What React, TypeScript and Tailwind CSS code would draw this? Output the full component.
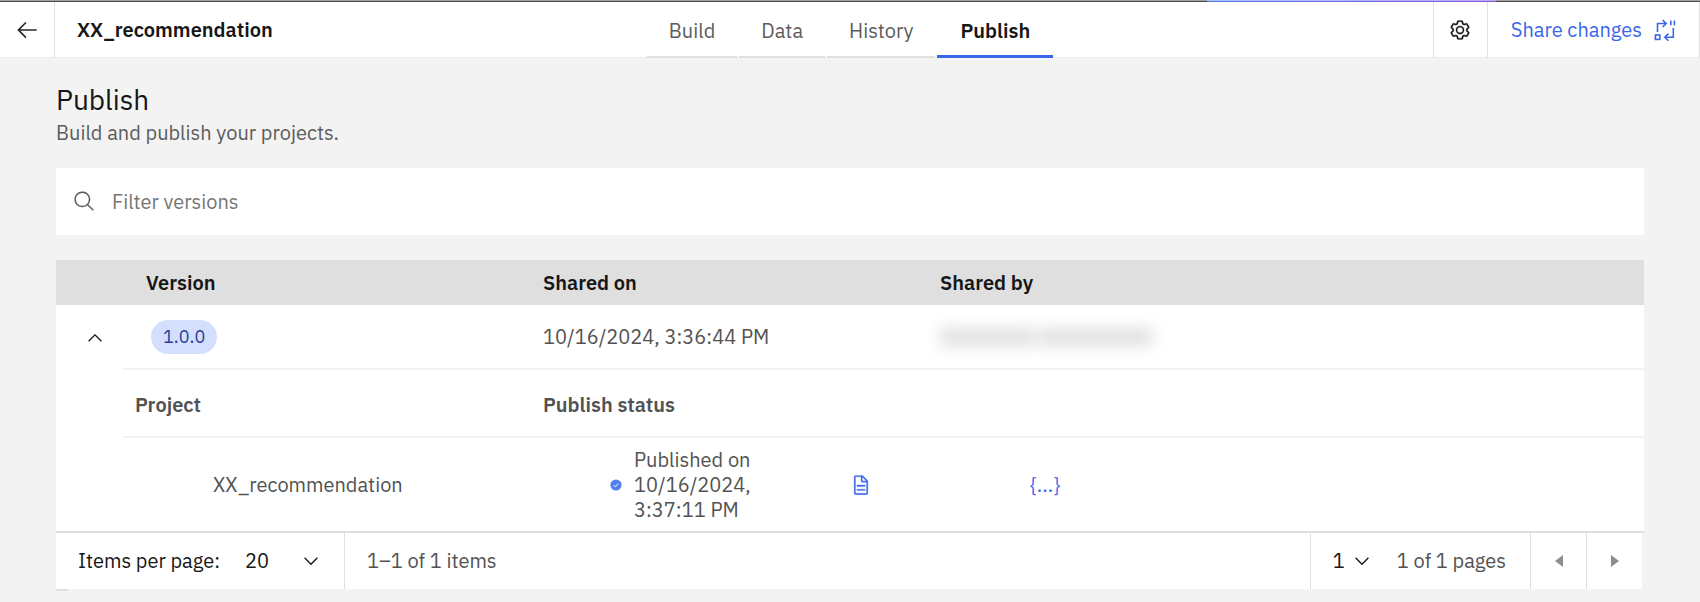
import React from "react";

type IconProps = { className?: string };

function ArrowLeft({ className }: IconProps) {
  return (
    <svg viewBox="0 0 32 32" fill="currentColor" className={className} aria-hidden="true">
      <path d="M14 26l1.41-1.41L7.83 17H28v-2H7.83l7.58-7.59L14 6 4 16z" />
    </svg>
  );
}

function Settings({ className }: IconProps) {
  return (
    <svg viewBox="0 0 32 32" fill="currentColor" stroke="currentColor" strokeWidth="0.4" className={className} aria-hidden="true">
      <path d="M27,16.76c0-.25,0-.5,0-.76s0-.51,0-.77l1.92-1.68A2,2,0,0,0,29.3,11L26.94,7a2,2,0,0,0-1.73-1,2,2,0,0,0-.64.1l-2.43.82a11.35,11.35,0,0,0-1.31-.75l-.51-2.52a2,2,0,0,0-2-1.61H13.64a2,2,0,0,0-2,1.61l-.51,2.52a11.48,11.48,0,0,0-1.32.75L7.43,6.06A2,2,0,0,0,6.79,6,2,2,0,0,0,5.06,7L2.7,11a2,2,0,0,0,.41,2.51L5,15.24c0,.25,0,.5,0,.76s0,.51,0,.77L3.11,18.45A2,2,0,0,0,2.7,21L5.06,25a2,2,0,0,0,1.73,1,2,2,0,0,0,.64-.1l2.43-.82a11.35,11.35,0,0,0,1.31.75l.51,2.52a2,2,0,0,0,2,1.61h4.72a2,2,0,0,0,2-1.61l.51-2.52a11.48,11.48,0,0,0,1.32-.75l2.42.82a2,2,0,0,0,.64.1,2,2,0,0,0,1.73-1L29.3,21a2,2,0,0,0-.41-2.51ZM25.21,24l-3.43-1.16a8.86,8.86,0,0,1-2.71,1.57L18.36,28H13.64l-.71-3.55a9.36,9.36,0,0,1-2.7-1.57L6.79,24,4.43,20l2.72-2.4a8.9,8.9,0,0,1,0-3.13L4.43,12,6.79,8l3.43,1.16a8.86,8.86,0,0,1,2.71-1.57L13.64,4h4.72l.71,3.55a9.36,9.36,0,0,1,2.7,1.57L25.21,8,27.57,12l-2.72,2.4a8.9,8.9,0,0,1,0,3.13L27.57,20Z" />
      <path d="M16,22a6,6,0,1,1,6-6A5.94,5.94,0,0,1,16,22Zm0-10a3.91,3.91,0,0,0-4,4,3.91,3.91,0,0,0,4,4,3.91,3.91,0,0,0,4-4A3.91,3.91,0,0,0,16,12Z" />
    </svg>
  );
}

function ShareChanges({ className }: IconProps) {
  return (
    <svg viewBox="0 0 22 22" fill="none" stroke="currentColor" strokeWidth="1.6" className={className} aria-hidden="true">
      <path d="M3.5 13V4.5h8M8.6 1 12.2 4.5 8.6 8" />
      <path d="M19.3 9v9.2h-8M14.4 14.6 10.8 18.2l3.6 3.6" />
      <rect x="1.4" y="16" width="4.4" height="4.4" />
      <path d="M16.8 1.6v4.6M20.4 1.6v4.6" />
    </svg>
  );
}

function Search({ className }: IconProps) {
  return (
    <svg viewBox="0 0 32 32" fill="currentColor" className={className} aria-hidden="true">
      <path d="M29,27.5859l-7.5521-7.5521a11.0177,11.0177,0,1,0-1.4141,1.4141L27.5859,29ZM4,13a9,9,0,1,1,9,9A9.01,9.01,0,0,1,4,13Z" />
    </svg>
  );
}

function ChevronDown({ className }: IconProps) {
  return (
    <svg viewBox="0 0 16 16" fill="currentColor" className={className} aria-hidden="true">
      <path d="M8 11 3 6l.7-.7L8 9.6l4.3-4.3.7.7z" />
    </svg>
  );
}

function Document({ className }: IconProps) {
  return (
    <svg viewBox="0 0 32 32" fill="currentColor" stroke="currentColor" strokeWidth="0.4" className={className} aria-hidden="true">
      <path d="M25.7,9.3l-7-7C18.5,2.1,18.3,2,18,2H8C6.9,2,6,2.9,6,4v24c0,1.1,0.9,2,2,2h16c1.1,0,2-0.9,2-2V10C26,9.7,25.9,9.5,25.7,9.3z M18,4.4l5.6,5.6H18V4.4z M24,28H8V4h8v6c0,1.1,0.9,2,2,2h6V28z" />
      <path d="M10 22h12v2H10zM10 16h12v2H10z" />
    </svg>
  );
}

function StatusDot({ className }: IconProps) {
  return (
    <svg viewBox="0 0 12 12" className={className} aria-hidden="true">
      <circle cx="6" cy="6" r="5.6" fill="#5080f0" />
      <path d="M3.6 6.1 5.3 7.8 8.4 4.6" fill="none" stroke="#fff" strokeWidth="1" />
    </svg>
  );
}

function Caret({ className }: IconProps) {
  return (
    <svg viewBox="0 0 8 12" fill="currentColor" className={className} aria-hidden="true">
      <path d="M8 0v12L0 6z" />
    </svg>
  );
}

const tabs = ["Build", "Data", "History", "Publish"];

function LoadingStrip() {
  return (
    <div>
      <div className="h-px bg-[#a0a0a0]">
        <div className="ml-[71%] h-px w-[17%] bg-linear-to-r from-[#a5bdfa] to-[#bfa6f3]" />
      </div>
      <div className="h-px bg-[#4d4d4d]">
        <div className="ml-[71%] h-px w-[17%] bg-linear-to-r from-[#5b7fe8] to-[#8460d8]" />
      </div>
    </div>
  );
}

function Header() {
  return (
    <header className="grid h-14 grid-cols-[1fr_auto_1fr] border-b border-[#ebebeb] bg-white">
      <div className="flex">
        <button aria-label="Back" className="flex w-[55px] items-center justify-center border-r border-[#e0e0e0] text-[#262626]">
          <ArrowLeft className="size-[26px]" />
        </button>
        <h1 className="flex items-center pl-[22px] text-xl font-semibold">XX_recommendation</h1>
      </div>
      <nav className="-mb-px flex gap-0.5">
        {tabs.map((tab) => (
          <a
            key={tab}
            href="#"
            aria-current={tab === "Publish" ? "page" : undefined}
            className={
              tab === "Publish"
                ? "flex items-center border-b-[3px] border-[#3a66ea] px-[23px] pt-1 text-xl font-semibold"
                : "flex items-center border-b-2 border-[#e0e0e0] px-[22px] pt-1 text-xl text-[#5c5c5c]"
            }
          >
            {tab}
          </a>
        ))}
      </nav>
      <div className="flex justify-end">
        <button aria-label="Settings" className="flex w-[54px] items-center justify-center border-l border-[#e0e0e0] text-[#161616]">
          <Settings className="size-[22px]" />
        </button>
        <button className="flex items-center gap-3 border-x border-[#e0e0e0] px-[23px] text-xl text-[#3a66ea]">
          Share changes
          <ShareChanges className="size-[22px]" />
        </button>
      </div>
    </header>
  );
}

function VersionTable() {
  return (
    <table className="w-full table-fixed border-separate border-spacing-0 bg-white text-left text-xl text-[#525252]">
      <colgroup>
        <col className="w-[67px]" />
        <col />
        <col className="w-1/4" />
        <col className="w-1/4" />
        <col className="w-1/4" />
      </colgroup>
      <thead className="bg-[#dfdfdf] text-[#161616]">
        <tr className="h-[45px]">
          <td />
          <th className="pl-[23px] font-semibold">Version</th>
          <th className="pl-[90px] font-semibold">Shared on</th>
          <th className="pl-[90px] font-semibold">Shared by</th>
          <td />
        </tr>
      </thead>
      <tbody>
        <tr className="h-[65px]">
          <td className="pl-7">
            <button aria-label="Collapse version 1.0.0" aria-expanded="true" className="block text-[#161616]">
              <ChevronDown className="size-[22px] rotate-180" />
            </button>
          </td>
          <td className="border-b-2 border-[#f1f1f1] pl-7">
            <span className="inline-block rounded-full bg-[#d3dffd] px-3 py-1 text-lg leading-[26px] text-[#2a3f9d]">1.0.0</span>
          </td>
          <td className="border-b-2 border-[#f1f1f1] pl-[90px]">10/16/2024, 3:36:44 PM</td>
          <td className="border-b-2 border-[#f1f1f1] pl-[90px]">
            <div className="flex h-4 gap-1 blur-[8px]">
              <div className="w-24 bg-[#dcdcdc]" />
              <div className="w-28 bg-[#dcdcdc]" />
            </div>
          </td>
          <td className="border-b-2 border-[#f1f1f1]" />
        </tr>
        <tr className="h-[68px]">
          <td />
          <th className="border-b-2 border-[#f1f1f1] pl-3 pt-1 font-semibold">Project</th>
          <th className="border-b-2 border-[#f1f1f1] pl-[90px] pt-1 font-semibold">Publish status</th>
          <td className="border-b-2 border-[#f1f1f1]" />
          <td className="border-b-2 border-[#f1f1f1]" />
        </tr>
        <tr className="h-[93px]">
          <td />
          <td className="pl-[90px]">XX_recommendation</td>
          <td className="pl-[157px]">
            <div className="flex items-center gap-3">
              <StatusDot className="size-3 shrink-0" />
              <p className="w-32 leading-[25px]">Published on 10/16/2024, 3:37:11 PM</p>
            </div>
          </td>
          <td>
            <div className="flex items-center gap-[158px] text-[#3a66ea]">
              <button aria-label="View document">
                <Document className="size-[22px]" />
              </button>
              <button aria-label="View snippet">{"{...}"}</button>
            </div>
          </td>
          <td />
        </tr>
      </tbody>
    </table>
  );
}

function Pagination() {
  return (
    <div className="border-t-2 border-[#dedede] text-xl text-[#525252]">
      <div className="mr-0.5 flex h-14 bg-white">
        <div className="flex items-center border-r border-[#e0e0e0] px-[22px] text-[#161616]">
          <label htmlFor="page-size" className="w-[167px]">Items per page:</label>
          <div className="relative flex items-center">
            <select id="page-size" className="w-[77px] appearance-none bg-transparent">
              <option>20</option>
            </select>
            <ChevronDown className="pointer-events-none absolute right-0 size-[22px]" />
          </div>
        </div>
        <p className="flex flex-1 items-center pl-[22px]">1–1 of 1 items</p>
        <div className="flex items-center border-l border-[#e0e0e0] pl-[22px] pr-6">
          <div className="relative mr-6 flex items-center text-[#161616]">
            <select id="page-number" aria-label="Page number" className="w-10 appearance-none bg-transparent">
              <option>1</option>
            </select>
            <ChevronDown className="pointer-events-none absolute right-0 size-[22px]" />
          </div>
          1 of 1 pages
        </div>
        <button aria-label="Previous page" className="flex w-14 items-center justify-center border-l border-[#e0e0e0] text-[#8d8d8d]">
          <Caret className="h-3 w-2" />
        </button>
        <button aria-label="Next page" className="flex w-14 items-center justify-center border-l border-[#e0e0e0] text-[#8d8d8d]">
          <Caret className="h-3 w-2 rotate-180" />
        </button>
      </div>
    </div>
  );
}

export default function App() {
  return (
    <div className="min-h-screen bg-[#f3f3f3] font-['IBM_Plex_Sans',Roboto,sans-serif] text-[#161616]">
      <LoadingStrip />
      <Header />
      <main className="px-14 pt-6">
        <h2 className="text-[28px] leading-9">Publish</h2>
        <p className="text-xl leading-[30px] text-[#5c5c5c]">Build and publish your projects.</p>
        <div className="mt-5 flex h-[67px] items-center gap-4 bg-white pl-[17px]">
          <Search className="size-[23px] text-[#5c5c5c]" />
          <input
            type="text"
            aria-label="Filter versions"
            placeholder="Filter versions"
            className="flex-1 bg-transparent text-xl outline-none placeholder:text-[#767676]"
          />
        </div>
        <div className="mt-[25px]">
          <VersionTable />
          <Pagination />
          <div className="h-0.5 w-3 bg-[#e0e0e0]" />
        </div>
      </main>
    </div>
  );
}
